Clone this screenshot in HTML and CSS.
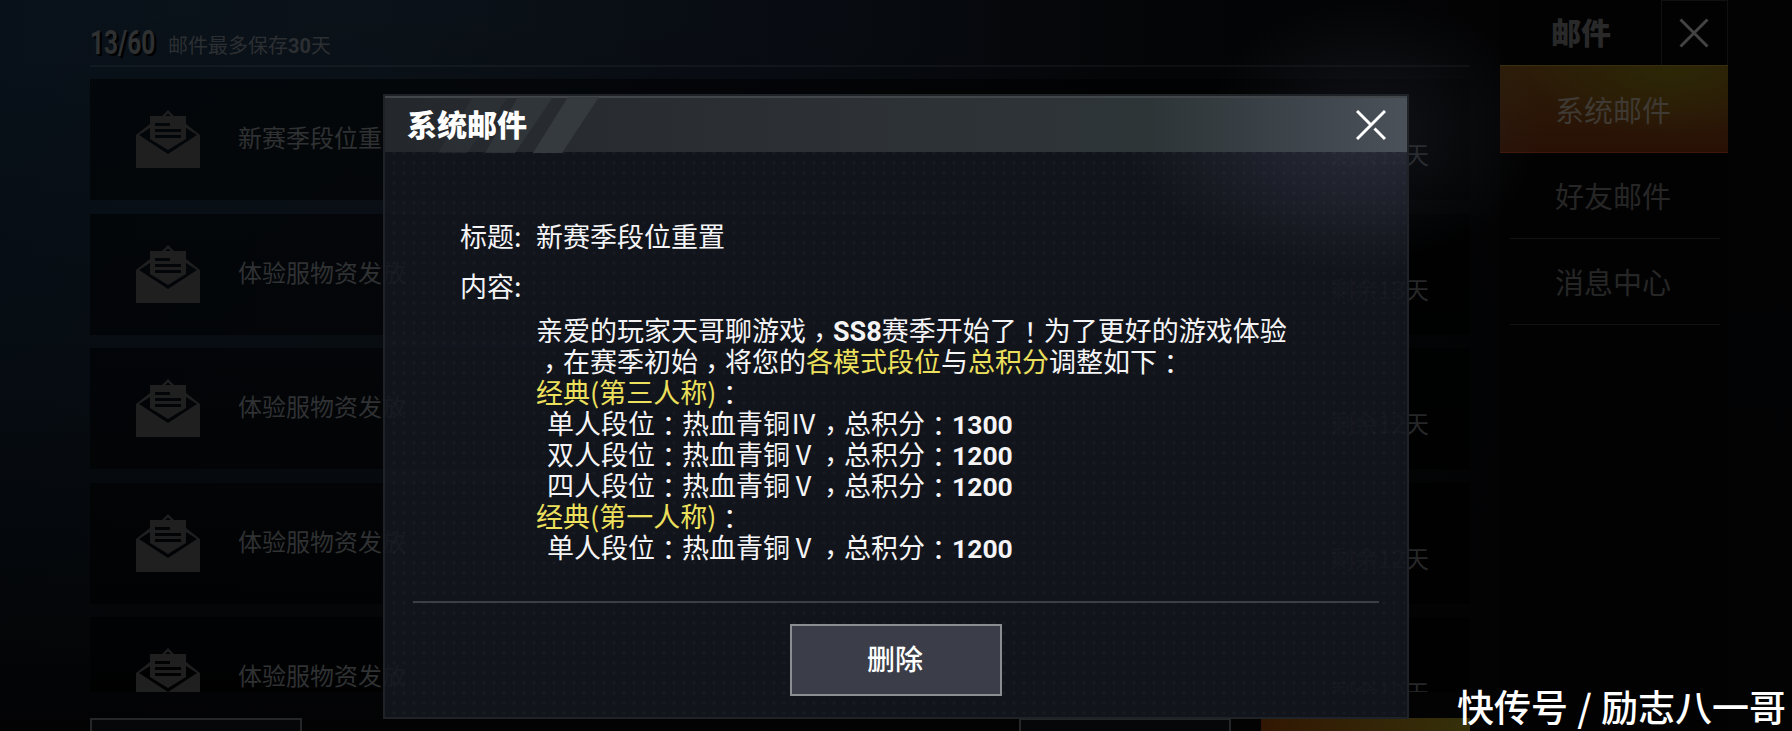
FILE: index.html
```html
<!DOCTYPE html>
<html lang="zh-CN">
<head>
    <meta charset="UTF-8">
    <meta name="viewport" content="width=device-width, initial-scale=1.0">
    <title>系统邮件</title>
    <link rel="stylesheet" href="styles.css">
</head>
<body>
    <svg class="defs" width="0" height="0">
        <symbol id="mail" viewBox="0 0 64 58">
            <path fill-rule="evenodd" d="M0 25L14 14V6H26L32 0L38 6H50V14L64 25V58H0ZM14 18L3 25L32 44L61 25L50 18V29L32 40L14 29ZM29 6H35L32 3.500ZM19 13V16H34V13ZM19 19V22H45V19ZM19 25V28H45V25Z"/>
        </symbol>
    </svg>

    <div class="screen">
        <main class="inbox">
            <header class="inbox-header">
                <span class="count">13/60</span>
                <span class="hint">邮件最多保存<b>30</b>天</span>
            </header>
            <div class="mail-list">
                <div class="mail">
                    <svg class="mail-icon"><use href="#mail"/></svg>
                    <span class="mail-title">新赛季段位重置</span>
                    <span class="mail-left">剩余13天</span>
                </div>
                <div class="mail">
                    <svg class="mail-icon"><use href="#mail"/></svg>
                    <span class="mail-title">体验服物资发放</span>
                    <span class="mail-left">剩余13天</span>
                </div>
                <div class="mail">
                    <svg class="mail-icon"><use href="#mail"/></svg>
                    <span class="mail-title">体验服物资发放</span>
                    <span class="mail-left">剩余12天</span>
                </div>
                <div class="mail">
                    <svg class="mail-icon"><use href="#mail"/></svg>
                    <span class="mail-title">体验服物资发放</span>
                    <span class="mail-left">剩余12天</span>
                </div>
                <div class="mail">
                    <svg class="mail-icon"><use href="#mail"/></svg>
                    <span class="mail-title">体验服物资发放</span>
                    <span class="mail-left">剩余12天</span>
                </div>
            </div>
            <div class="actions">
                <div class="action first"></div>
                <div class="action"></div>
                <div class="action primary"></div>
            </div>
        </main>

        <nav class="sidebar">
            <div class="sidebar-header">
                <h2>邮件</h2>
                <div class="sidebar-close">
                    <svg width="30" height="30" viewBox="0 0 30 30"><path d="M1.5 1.5L28.5 28.5M28.5 1.5L1.5 28.5"/></svg>
                </div>
            </div>
            <div class="tab active">系统邮件</div>
            <div class="tab">好友邮件</div>
            <div class="tab">消息中心</div>
        </nav>
    </div>

    <div class="glow"></div>

    <section class="dialog">
        <header class="dialog-header">
            <svg class="stripes" width="170" height="56" viewBox="0 0 170 56"><path opacity="0.4" d="M35 0H70L29 56H0Z"/><path opacity="0.7" d="M80 0H115L77 56H47Z"/><path d="M130 0H161L124 56H95Z"/></svg>
            <h1>系统邮件</h1>
            <svg class="close" width="30" height="30" viewBox="0 0 30 30"><path d="M1 1L14.5 14.5M29 1L1 29M18.5 18.5L29 29"/></svg>
        </header>
        <div class="dialog-body">
            <div class="row">
                <span class="label">标题:</span>
                <span>新赛季段位重置</span>
            </div>
            <div class="row">
                <span class="label">内容:</span>
            </div>
            <div class="content">
                <p>亲爱的玩家天哥聊游戏<i class="comma" lang="zh-TW">，</i><b>SS8</b>赛季开始了<i lang="zh-TW">！</i>为了更好的游戏体验</p>
                <p><i class="comma" lang="zh-TW">，</i>在赛季初始<i class="comma" lang="zh-TW">，</i>将您的<em>各模式段位</em>与<em>总积分</em>调整如下<i lang="zh-TW">：</i></p>
                <p><em>经典(第三人称)</em><i lang="zh-TW">：</i></p>
                <p class="rank">单人段位<i lang="zh-TW">：</i>热血青铜Ⅳ<i class="comma" lang="zh-TW">，</i>总积分<i lang="zh-TW">：</i><b>1300</b></p>
                <p class="rank">双人段位<i lang="zh-TW">：</i>热血青铜Ⅴ<i class="comma" lang="zh-TW">，</i>总积分<i lang="zh-TW">：</i><b>1200</b></p>
                <p class="rank">四人段位<i lang="zh-TW">：</i>热血青铜Ⅴ<i class="comma" lang="zh-TW">，</i>总积分<i lang="zh-TW">：</i><b>1200</b></p>
                <p><em>经典(第一人称)</em><i lang="zh-TW">：</i></p>
                <p class="rank">单人段位<i lang="zh-TW">：</i>热血青铜Ⅴ<i class="comma" lang="zh-TW">，</i>总积分<i lang="zh-TW">：</i><b>1200</b></p>
            </div>
        </div>
        <footer class="dialog-footer">
            <button class="delete">删除</button>
        </footer>
    </section>

    <div class="watermark">快传号 / 励志八一哥</div>
</body>
</html>
```
FILE: styles.css
```css
* {
    box-sizing: border-box;
    margin: 0;
    padding: 0;
}
body {
    position: relative;
    width: 1792px;
    height: 731px;
    overflow: hidden;
    background: #030304;
    font-family: "Noto Sans CJK SC", sans-serif;
    color: #37383a;
}
.defs {
    position: absolute;
}
.screen {
    display: flex;
    height: 731px;
    padding-left: 90px;
    background: linear-gradient(180deg, rgba(2,3,4,0) 0%, rgba(2,3,4,0.35) 50%, #030304 100%), linear-gradient(90deg, #08111a 0, #0b1219 350px, #080c12 800px, #040507 1150px, #030304 1500px);
}

/* mail list */
.inbox {
    display: flex;
    flex-direction: column;
    width: 1380px;
    margin-right: 30px;
}
.inbox-header {
    display: flex;
    flex: none;
    height: 67px;
    border-bottom: 2px solid rgba(110,120,130,0.09);
    white-space: nowrap;
}
.count {
    width: 78px;
    padding-top: 24px;
    font: bold 34px/36px Roboto, sans-serif;
    color: #2e3032;
    text-shadow: 3px 2px 0 #000;
    transform: scaleX(0.72);
    transform-origin: 0 0;
}
.hint {
    padding-top: 30px;
    font-size: 20px;
    line-height: 30px;
    color: #2c2f32;
}
b {
    font-family: Roboto, sans-serif;
    font-weight: bold;
}
.mail-list {
    display: flex;
    flex-direction: column;
    gap: 13.5px;
    height: 625px;
    padding-top: 12px;
    overflow: hidden;
}
.mail {
    display: flex;
    flex: none;
    height: 121px;
    padding: 0 41px 0 46px;
    background: rgba(0,0,0,0.55);
}
.mail-icon {
    width: 64px;
    height: 58px;
    margin-top: 31px;
    fill: #1f1f20;
}
.mail-title {
    margin: 40px 0 0 38px;
    font-size: 24px;
    line-height: 36px;
    color: #2f3133;
}
.mail-left {
    margin: 57px 0 0 auto;
    font-size: 24px;
    line-height: 36px;
    color: #262729;
}
.actions {
    display: flex;
    height: 13px;
    margin-top: 26px;
    gap: 30px;
}
.action {
    flex: none;
    width: 212px;
    border: 2px solid #242627;
    border-bottom: 0;
    background: #060708;
}
.action.first {
    margin-right: 687px;
}
.action.primary {
    width: 209px;
    border: 0;
    background: linear-gradient(90deg, #311703, #35300a);
}

/* right side menu */
.sidebar {
    width: 228px;
    background: #020202;
}
.sidebar-header {
    display: flex;
    justify-content: space-between;
    height: 65px;
}
.sidebar-header h2 {
    padding: 9px 0 0 51px;
    font-size: 30px;
    font-weight: 900;
    line-height: 44px;
    color: #29292a;
}
.sidebar-close {
    width: 67px;
    padding: 17px 0 0 17px;
    border: 1px solid #0f1011;
    border-bottom: 0;
}
.sidebar-close path {
    fill: none;
    stroke: #434344;
    stroke-width: 3;
}
.tab {
    height: 86px;
    margin: 0 8px 0 10px;
    padding-left: 45px;
    border-bottom: 1px solid #121212;
    font-size: 29px;
    line-height: 84px;
    color: #262626;
}
.tab.active {
    height: 88px;
    margin: 0;
    padding-left: 55px;
    border-top: 1px solid #382f12;
    border-bottom: 1px solid #401708;
    background: radial-gradient(ellipse at 75% 0, #2c2706 0, rgba(44,39,6,0) 60%), linear-gradient(180deg, #2c1c08, #281005);
    line-height: 86px;
    color: #3e3932;
}

/* light around the dialog close button */
.glow {
    position: absolute;
    left: 1203px;
    top: 0;
    width: 340px;
    height: 260px;
    background: radial-gradient(closest-side, rgba(55,63,78,0.28), rgba(55,63,78,0));
}

.dialog {
    position: absolute;
    left: 383px;
    top: 94px;
    width: 1026px;
    height: 625px;
    border: 2px solid #1f2226;
    background: radial-gradient(circle, rgba(110,120,125,0.08) 1px, transparent 2px) 4px 62px / 10px 10px, radial-gradient(ellipse at 990px 20px, rgba(70,76,94,0.45) 0, rgba(70,76,94,0) 260px), rgba(20,23,31,0.88);
}
.dialog-header {
    position: relative;
    display: flex;
    justify-content: space-between;
    height: 56px;
    padding: 0 21px 0 22px;
    border-top: 2px solid #40464a;
    background: linear-gradient(90deg, #24282c 0, #2c3034 40%, #2e3537 75%, #3e454c 90%, #4a5158 100%);
}
.stripes {
    position: absolute;
    left: 53px;
    top: -1px;
    fill: #343a3e;
}
.dialog-header h1 {
    position: relative;
    font-size: 30px;
    font-weight: 900;
    line-height: 50px;
    color: #fff;
}
.close {
    margin-top: 12px;
    fill: none;
    stroke: #fff;
    stroke-width: 3;
}
.dialog-body {
    height: 451px;
    margin: 0 28px;
    padding: 59px 0 0 47px;
    border-bottom: 2px solid #3b3e43;
    font-size: 27px;
    color: #f4f4f6;
}
.row {
    display: flex;
    height: 50px;
    line-height: 50px;
}
.label {
    width: 76px;
}
.content {
    margin: 3px 0 0 76px;
    line-height: 31px;
    white-space: nowrap;
}
.content i {
    font-family: "Noto Sans CJK TC", sans-serif;
    font-style: normal;
    line-height: 0;
    vertical-align: -2px;
}
.content .comma {
    vertical-align: -7px;
}
.content em {
    font-style: normal;
    color: #ece05c;
}
.content p {
    height: 31px;
}
.content .rank {
    padding-left: 11px;
}
.content .rank b {
    font-size: 26.5px;
}
.dialog-footer {
    display: flex;
    justify-content: center;
    padding-top: 21px;
}
.delete {
    width: 212px;
    height: 72px;
    padding: 0 2px 4px 0;
    border: 2px solid #8b8f94;
    background: #3b3e49;
    font-family: inherit;
    font-size: 28px;
    font-weight: 500;
    color: #fff;
}

.watermark {
    position: absolute;
    right: 6px;
    bottom: 1px;
    font-size: 37px;
    font-weight: 500;
    line-height: 48px;
    word-spacing: 1px;
    color: #fff;
}
```
